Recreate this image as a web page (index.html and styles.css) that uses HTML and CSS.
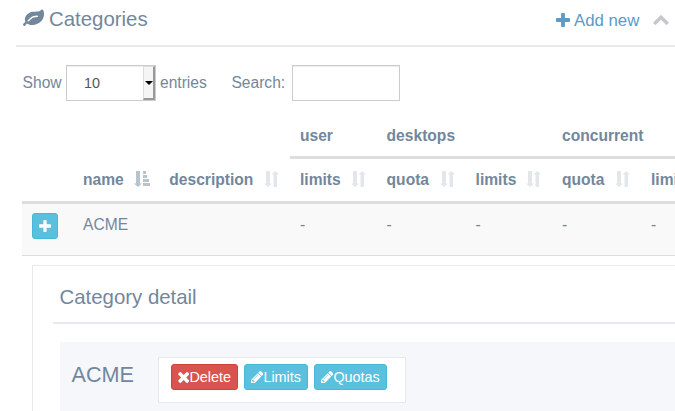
FILE: index.html
```html
<!DOCTYPE html>
<html lang="en">
<head>
<meta charset="utf-8">
<title>Categories</title>
<link rel="stylesheet" href="styles.css">
</head>
<body>
<svg class="defs" aria-hidden="true">
  <symbol id="leaf" viewBox="0 0 1792 1792"><path d="M1280 704q0-26-19-45t-45-19q-172 0-318 49.500t-259.500 134-235.500 219.500q-19 21-19 45 0 26 19 45t45 19q24 0 45-19 27-24 74-71t67-66q137-124 268.500-176t313.500-52q26 0 45-19t19-45zm512-198q0 95-20 193-46 224-184.500 383t-357.500 268q-214 108-438 108-148 0-286-47-15-5-88-42t-96-37q-16 0-39.500 32t-45 70-52.500 70-60 32q-43 0-63.500-17.500t-45.500-59.500q-2-4-6-11t-5.500-10-3-9.500-1.500-13.500q0-35 31-73.500t68-65.500 68-56 31-48q0-4-14-38t-16-44q-9-51-9-104 0-115 43.500-220t119-184.500 170.500-139 204-95.500q55-18 145-25.500t179.500-9 178.500-6 163.500-24 113.500-56.500l29.500-29.500 29.500-28 27-20 36.500-16 43.500-4.500q39 0 70.500 46t47.500 112 24 124 8 96z"/></symbol>
  <symbol id="plus" viewBox="192 128 1408 1408"><path d="M1600 736v192q0 40-28 68t-68 28h-416v416q0 40-28 68t-68 28h-192q-40 0-68-28t-28-68v-416h-416q-40 0-68-28t-28-68v-192q0-40 28-68t68-28h416v-416q0-40 28-68t68-28h192q40 0 68 28t28 68v416h416q40 0 68 28t28 68z"/></symbol>
  <symbol id="up" viewBox="90 480 1612 1035"><path d="M1683 1331l-166 165q-19 19-45 19t-45-19l-531-531-531 531q-19 19-45 19t-45-19l-166-165q-19-19-19-45.500t19-45.500l742-741q19-19 45-19t45 19l742 741q19 19 19 45.500t-19 45.500z"/></symbol>
  <symbol id="times" viewBox="302 366 1188 1188"><path d="M1490 1322q0 40-28 68l-136 136q-28 28-68 28t-68-28l-294-294-294 294q-28 28-68 28t-68-28l-136-136q-28-28-28-68t28-68l294-294-294-294q-28-28-28-68t28-68l136-136q28-28 68-28t68 28l294 294 294-294q28-28 68-28t68 28l136 136q28 28 28 68t-28 68l-294 294 294 294q28 28 28 68z"/></symbol>
  <symbol id="pencil" viewBox="128 149 1515 1515"><path d="M491 1536l91-91-235-235-91 91v107h128v128h107zm523-928q0-22-22-22-10 0-17 7l-542 542q-7 7-7 17 0 22 22 22 10 0 17-7l542-542q7-7 7-17zm-54-192l416 416-832 832h-416v-416zm683 96q0 53-37 90l-166 166-416-416 166-165q36-38 90-38 53 0 91 38l235 234q37 39 37 91z"/></symbol>
  <symbol id="sort" viewBox="0 0 16 16"><path d="M2 0h4v12.500H8L4 16 0 12.500h2zM9.500 16h3.500V3.500H15L11.300 0 7.500 3.500h2z"/></symbol>
  <symbol id="sort-asc" viewBox="0 0 16 16"><path d="M2 0h4v12.500H8L4 16 0 12.500h2zM9 0h3v3H9zM9 4h4.200v3H9zM9 8h6v3H9zM9 12h7v3H9z"/></symbol>
</svg>

<main class="panel">
  <header class="title">
    <svg class="leaf"><use href="#leaf"/></svg>
    <h2>Categories</h2>
    <a class="add"><svg><use href="#plus"/></svg>Add new</a>
    <svg class="collapse"><use href="#up"/></svg>
  </header>

  <div class="controls">
    <span class="show">Show</span>
    <span class="select"><span class="value">10</span><span class="arrow"></span></span>
    <span class="entries">entries</span>
    <span class="label">Search:</span>
    <input class="search" type="text" aria-label="Search">
  </div>

  <div class="table">
    <div class="groups">
      <div></div>
      <div class="group">user</div>
      <div class="group">desktops</div>
      <div class="group">concurrent</div>
    </div>
    <div class="row head">
      <div></div>
      <div>name<svg class="active"><use href="#sort-asc"/></svg></div>
      <div>description<svg><use href="#sort"/></svg></div>
      <div>limits<svg><use href="#sort"/></svg></div>
      <div>quota<svg><use href="#sort"/></svg></div>
      <div>limits<svg><use href="#sort"/></svg></div>
      <div>quota<svg><use href="#sort"/></svg></div>
      <div>limits<svg><use href="#sort"/></svg></div>
    </div>
    <div class="row data">
      <div><button class="btn expand" aria-label="Expand"><svg><use href="#plus"/></svg></button></div>
      <div>ACME</div>
      <div></div>
      <div>-</div>
      <div>-</div>
      <div>-</div>
      <div>-</div>
      <div>-</div>
    </div>
  </div>

  <section class="detail">
    <h2>Category detail</h2>
    <div class="card">
      <h3>ACME</h3>
      <div class="actions">
        <button class="btn danger"><svg class="times"><use href="#times"/></svg>Delete</button>
        <button class="btn limits"><svg><use href="#pencil"/></svg>Limits</button>
        <button class="btn quotas"><svg><use href="#pencil"/></svg>Quotas</button>
      </div>
    </div>
  </section>
</main>
</body>
</html>
```
FILE: styles.css
```css
* { box-sizing: border-box; }
body {
  margin: 0;
  background: #fff;
  color: #73879c;
  font: 15.6px/22px "Liberation Sans", Arial, sans-serif;
}
.defs { display: none; }
svg { fill: currentColor; flex: none; display: block; }
h2, h3 { margin: 0; font-weight: 400; }
h2 { font-size: 20.4px; line-height: 24px; }
.panel { height: 411px; padding-left: 16px; overflow: hidden; }

.title {
  display: flex;
  align-items: center;
  height: 47px;
  padding: 0 0 7px 6px;
  border-bottom: 2px solid #e6e9ed;
}
.leaf { width: 21px; height: 21px; margin: 0 5px 1px 1px; }
.add {
  display: flex;
  align-items: center;
  width: 96.500px;
  margin: 3px 0 0 393.500px;
  color: #5a9bc7;
  font-size: 16.8px;
  white-space: nowrap;
}
.title h2 { flex: none; width: 113.500px; }
.add svg { width: 14px; height: 14px; margin: 0 4px 2px 0; }
.collapse { width: 16px; height: 10px; margin-top: 2px; color: #c5c7cb; }

.controls {
  display: flex;
  align-items: center;
  height: 36px;
  margin: 18px 0 0 6px;
}
.show { width: 44px; padding-left: .6px; }
.select {
  display: flex;
  width: 90px;
  height: 36px;
  border: 1px solid #ccc;
  box-shadow: inset 0 1px 1px rgba(0, 0, 0, .075);
  color: #555;
  font-size: 14.4px;
}
.value { flex: 1; padding: 6px 0 0 17px; }
.arrow {
  display: grid;
  place-items: center;
  width: 12px;
  height: 34px;
  background: #f5f5f5;
  border: solid;
  border-width: 1px 2px 2px 1px;
  border-color: #ddd #999 #999 #ddd;
}
.arrow::after {
  content: "";
  border: solid transparent;
  border-width: 4px 4px 0;
  border-top-color: #000;
}
.entries { width: 75px; padding-left: 4px; }
.label { width: 61px; padding-left: .4px; }
.search {
  width: 108px;
  height: 36px;
  border: 1px solid #ccc;
  box-shadow: inset 0 1px 1px rgba(0, 0, 0, .075);
}

.table { margin-left: 6px; }
.groups {
  display: grid;
  grid-template-columns: 268px 86.600px 175.400px 200px;
  height: 58px;
  font-weight: 700;
}
.group { padding: 24px 0 0 10px; border-bottom: 3px solid #ddd; }
.row {
  display: grid;
  grid-template-columns: 51px 86.300px 130.700px 86.600px 89px 86.400px 89px 111px;
}
.row > div { padding: 10px 10px 0; }
.head { height: 45px; border-bottom: 3px solid #ddd; font-weight: 700; }
.head > div { display: flex; justify-content: space-between; }
.head svg { width: 16px; height: 16px; margin: 2px -.4px 0 0; color: #e3e7eb; }
.head .active { color: #b9c3cd; }
.data { height: 52px; background: #f9f9f9; border-bottom: 1px solid #ddd; }

.btn {
  display: flex;
  align-items: center;
  height: 26px;
  padding: 0 6px;
  border: 1px solid #46b8da;
  border-radius: 3px;
  background: #5bc0de;
  color: #fff;
  font: 14.4px/20px "Liberation Sans", Arial, sans-serif;
}
.expand { width: 26px; margin-top: -1px; }
.expand svg { width: 12px; height: 12px; margin-bottom: 1px; }

.detail {
  height: 200px;
  margin: 9px 0 0 16px;
  padding: 19px 0 0 20px;
  border: 1px solid #e6e9ed;
  border-right: 0;
}
.detail h2 { height: 39px; padding-left: 6.500px; border-bottom: 2px solid #e6e9ed; }
.card {
  display: flex;
  height: 130px;
  margin: 18px 0 0 7px;
  padding: 15px 0 0 11px;
  background: #f5f7fa;
}
.card h3 { width: 87px; padding: 6px 0 0 .6px; font-size: 21.6px; line-height: 24px; }
.actions {
  display: flex;
  gap: 6px;
  width: 248px;
  height: 46px;
  padding: 6px 12px;
  border: 1px solid #e6e9ed;
  background: #fff;
}
.actions svg { width: 12.400px; height: 12.400px; }
.actions .times { width: 11.400px; height: 11px; margin-top: 1px; }
.danger { width: 67px; background: #d9534f; border-color: #d43f3a; }
.limits { width: 64px; }
.quotas { width: 73px; }
```
